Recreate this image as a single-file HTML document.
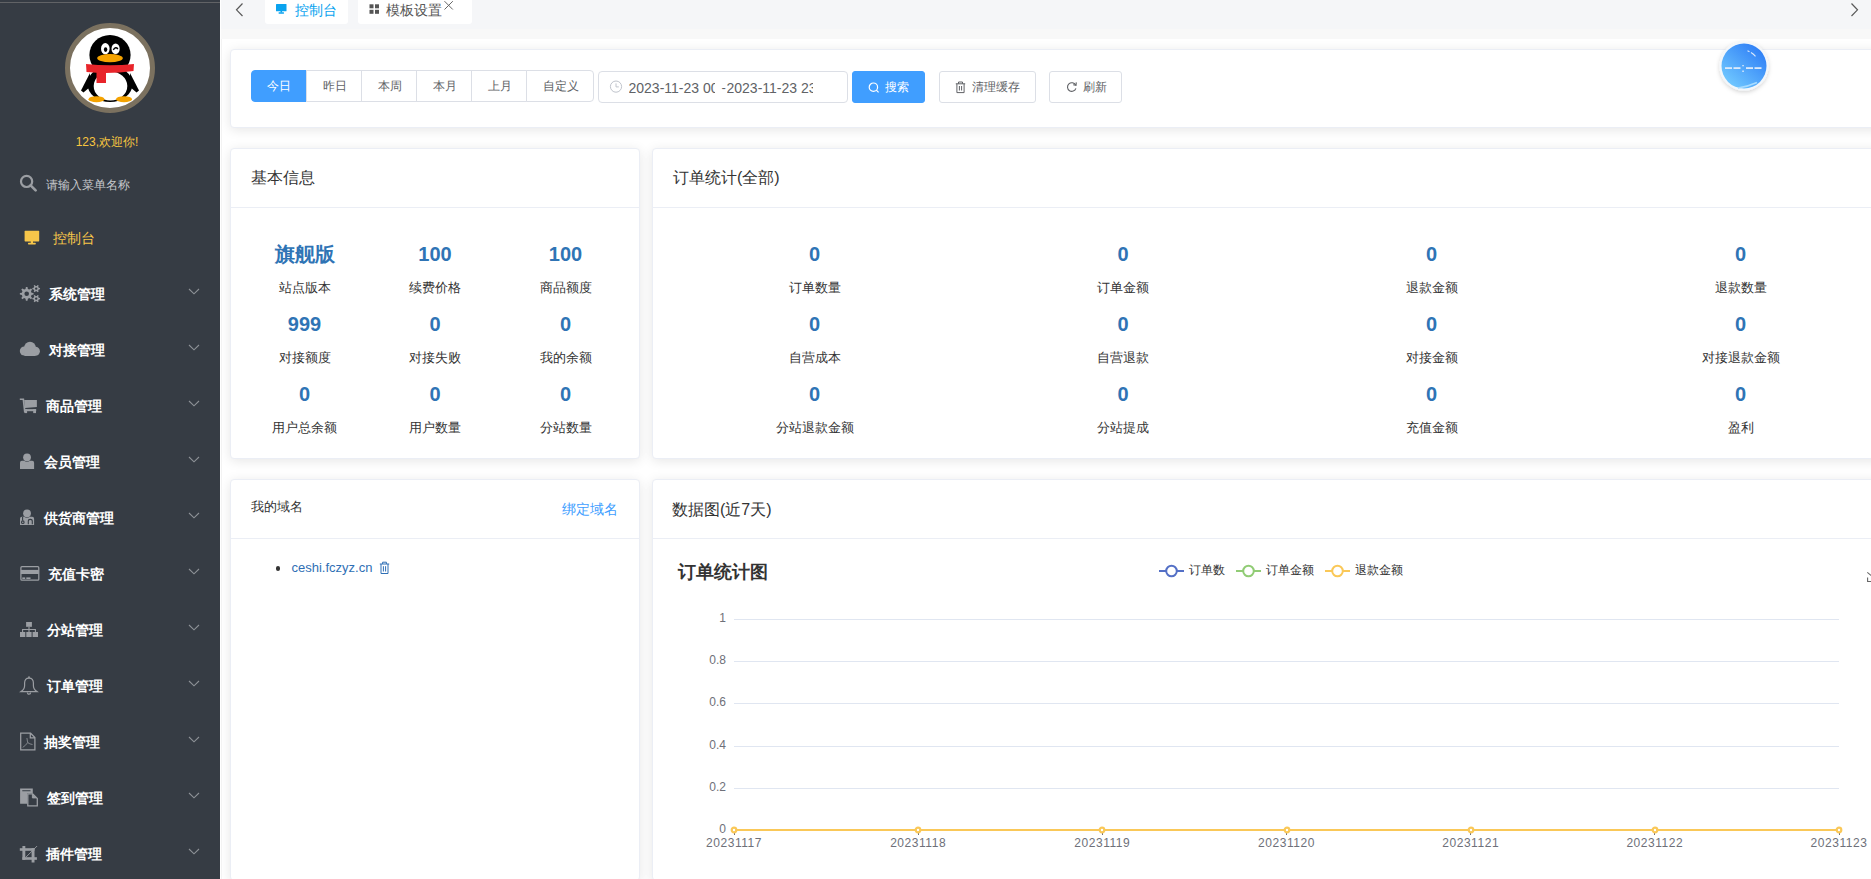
<!DOCTYPE html>
<html><head><meta charset="utf-8">
<style>
*{box-sizing:border-box;margin:0;padding:0}
html,body{width:1871px;height:879px;overflow:hidden;background:#fff;font-family:"Liberation Sans",sans-serif;color:#333}
.abs{position:absolute}
#side{position:absolute;left:0;top:0;width:220px;height:879px;background:#363c44;overflow:hidden}
#side .tl{position:absolute;left:0;top:2px;width:220px;height:1px;background:#616366}
.mt{position:absolute;font-size:14px;line-height:20px;color:#fff;white-space:nowrap;font-weight:700}
#topbar{position:absolute;left:220px;top:0;width:1651px;height:29px;background:#f5f6f8;border-left:1px solid #fff}
#wcol{position:absolute;left:220px;top:0;width:1px;height:879px;background:#fff;z-index:5}
#strip{position:absolute;left:221px;top:29px;width:1650px;height:10px;background:#f8f8f8}
#main{position:absolute;left:221px;top:39px;width:1650px;height:840px;background:#fff;overflow:hidden}
.card{position:absolute;background:#fff;border:1px solid #ebeef5;border-radius:4px;box-shadow:0 2px 12px 0 rgba(0,0,0,.1)}
.hd{position:absolute;left:0;right:0;top:0;height:58px;border-bottom:1px solid #ebeef5}
</style></head><body>
<div id="side">
<div class="tl"></div>
<svg class="abs" style="left:62px;top:20px" width="96" height="96" viewBox="62 20 96 96">
<circle cx="110" cy="68" r="42.5" fill="#fff" stroke="#7b715f" stroke-width="5"/>
<ellipse cx="110" cy="55" rx="20.6" ry="20" fill="#000"/>
<ellipse cx="110" cy="84" rx="22.5" ry="18" fill="#000"/>
<path d="M90,73 L81,90.5 L83.5,92.5 L90,87z" fill="#000"/>
<path d="M130,73 L139,90.5 L136.5,92.5 L130,87z" fill="#000"/>
<ellipse cx="110.5" cy="86" rx="16.8" ry="14.6" fill="#fff"/>
<ellipse cx="105.3" cy="48.7" rx="4.3" ry="5.6" fill="#fff"/>
<ellipse cx="115.6" cy="48.7" rx="4.1" ry="5.3" fill="#fff"/>
<ellipse cx="105.6" cy="49.6" rx="1.7" ry="2.3" fill="#000"/>
<path d="M113.3,49.8 q2.4,-3.6 4.6,-0.8" stroke="#000" stroke-width="1.4" fill="none"/>
<ellipse cx="110" cy="58.2" rx="12.8" ry="4.1" fill="#f5a300"/>
<path d="M86,64 Q110,66.5 134,64 L133.5,71 Q110,74.5 86.5,72z" fill="#e8242a"/>
<rect x="96.5" y="70" width="9.5" height="13" fill="#e8242a"/>
<ellipse cx="96.5" cy="99.2" rx="8" ry="3" fill="#f5a300"/>
<ellipse cx="124" cy="99.2" rx="8" ry="3" fill="#f5a300"/>
</svg>
<div class="abs" style="left:0;width:214px;top:134px;text-align:center;font-size:12px;line-height:16px;color:#f7c640;font-weight:500">123,欢迎你!</div>
<svg class="abs" style="left:19px;top:174px" width="19" height="18" viewBox="0 0 19 18"><circle cx="7.6" cy="7.4" r="5.6" fill="none" stroke="#9b9ea3" stroke-width="2.2"/><path d="M11.6,11.4 L16.6,16.4" stroke="#9b9ea3" stroke-width="2.6" stroke-linecap="round"/></svg>
<div class="abs" style="left:46px;top:177px;font-size:12px;line-height:16px;color:#c6c8cc;white-space:nowrap">请输入菜单名称</div>
<svg class="abs" style="left:24px;top:230px" width="16" height="15" viewBox="0 0 16 15"><rect x="0.6" y="0.8" width="14.6" height="10.6" fill="#f7c64a" rx="0.6"/><rect x="6.8" y="11" width="2.2" height="2" fill="#f7c64a"/><rect x="4" y="12.8" width="7.8" height="1.6" fill="#f7c64a" rx="0.6"/></svg>
<div class="abs" style="left:53px;top:228px;font-size:14px;line-height:20px;color:#f7c64a;white-space:nowrap">控制台</div>
<div class="mt" style="left:48.9px;top:284px">系统管理</div>
<svg class="abs" style="left:188px;top:288px" width="12" height="7" viewBox="0 0 12 7"><path d="M1,1 L6,5.8 L11,1" fill="none" stroke="#8e9297" stroke-width="1.1"/></svg>
<div class="mt" style="left:48.5px;top:340px">对接管理</div>
<svg class="abs" style="left:188px;top:344px" width="12" height="7" viewBox="0 0 12 7"><path d="M1,1 L6,5.8 L11,1" fill="none" stroke="#8e9297" stroke-width="1.1"/></svg>
<div class="mt" style="left:46px;top:396px">商品管理</div>
<svg class="abs" style="left:188px;top:400px" width="12" height="7" viewBox="0 0 12 7"><path d="M1,1 L6,5.8 L11,1" fill="none" stroke="#8e9297" stroke-width="1.1"/></svg>
<div class="mt" style="left:43.7px;top:452px">会员管理</div>
<svg class="abs" style="left:188px;top:456px" width="12" height="7" viewBox="0 0 12 7"><path d="M1,1 L6,5.8 L11,1" fill="none" stroke="#8e9297" stroke-width="1.1"/></svg>
<div class="mt" style="left:43.7px;top:508px">供货商管理</div>
<svg class="abs" style="left:188px;top:512px" width="12" height="7" viewBox="0 0 12 7"><path d="M1,1 L6,5.8 L11,1" fill="none" stroke="#8e9297" stroke-width="1.1"/></svg>
<div class="mt" style="left:48.2px;top:564px">充值卡密</div>
<svg class="abs" style="left:188px;top:568px" width="12" height="7" viewBox="0 0 12 7"><path d="M1,1 L6,5.8 L11,1" fill="none" stroke="#8e9297" stroke-width="1.1"/></svg>
<div class="mt" style="left:47px;top:620px">分站管理</div>
<svg class="abs" style="left:188px;top:624px" width="12" height="7" viewBox="0 0 12 7"><path d="M1,1 L6,5.8 L11,1" fill="none" stroke="#8e9297" stroke-width="1.1"/></svg>
<div class="mt" style="left:47px;top:676px">订单管理</div>
<svg class="abs" style="left:188px;top:680px" width="12" height="7" viewBox="0 0 12 7"><path d="M1,1 L6,5.8 L11,1" fill="none" stroke="#8e9297" stroke-width="1.1"/></svg>
<div class="mt" style="left:44.3px;top:732px">抽奖管理</div>
<svg class="abs" style="left:188px;top:736px" width="12" height="7" viewBox="0 0 12 7"><path d="M1,1 L6,5.8 L11,1" fill="none" stroke="#8e9297" stroke-width="1.1"/></svg>
<div class="mt" style="left:47px;top:788px">签到管理</div>
<svg class="abs" style="left:188px;top:792px" width="12" height="7" viewBox="0 0 12 7"><path d="M1,1 L6,5.8 L11,1" fill="none" stroke="#8e9297" stroke-width="1.1"/></svg>
<div class="mt" style="left:45.5px;top:844px">插件管理</div>
<svg class="abs" style="left:188px;top:848px" width="12" height="7" viewBox="0 0 12 7"><path d="M1,1 L6,5.8 L11,1" fill="none" stroke="#8e9297" stroke-width="1.1"/></svg>
<svg class="abs" style="left:0;top:0" width="220" height="879" viewBox="0 0 220 879">
<path fill-rule="evenodd" fill="#9b9ea3" d="M31.56,292.63 L33.55,293.00 L33.55,294.60 L31.56,294.97 L30.97,296.41 L32.11,298.08 L30.98,299.21 L29.31,298.07 L27.87,298.66 L27.50,300.65 L25.90,300.65 L25.53,298.66 L24.09,298.07 L22.42,299.21 L21.29,298.08 L22.43,296.41 L21.84,294.97 L19.85,294.60 L19.85,293.00 L21.84,292.63 L22.43,291.19 L21.29,289.52 L22.42,288.39 L24.09,289.53 L25.53,288.94 L25.90,286.95 L27.50,286.95 L27.87,288.94 L29.31,289.53 L30.98,288.39 L32.11,289.52 L30.97,291.19Z M29.00,293.80 A2.3,2.3 0 1 0 24.40,293.80 A2.3,2.3 0 1 0 29.00,293.80Z M38.78,287.81 L40.04,287.92 L40.04,289.28 L38.78,289.39 L38.17,290.44 L38.71,291.58 L37.53,292.27 L36.81,291.23 L35.59,291.23 L34.87,292.27 L33.69,291.58 L34.23,290.44 L33.62,289.39 L32.36,289.28 L32.36,287.92 L33.62,287.81 L34.23,286.76 L33.69,285.62 L34.87,284.93 L35.59,285.97 L36.81,285.97 L37.53,284.93 L38.71,285.62 L38.17,286.76Z M37.40,288.60 A1.2,1.2 0 1 0 35.00,288.60 A1.2,1.2 0 1 0 37.40,288.60Z M38.78,297.81 L40.04,297.92 L40.04,299.28 L38.78,299.39 L38.17,300.44 L38.71,301.58 L37.53,302.27 L36.81,301.23 L35.59,301.23 L34.87,302.27 L33.69,301.58 L34.23,300.44 L33.62,299.39 L32.36,299.28 L32.36,297.92 L33.62,297.81 L34.23,296.76 L33.69,295.62 L34.87,294.93 L35.59,295.97 L36.81,295.97 L37.53,294.93 L38.71,295.62 L38.17,296.76Z M37.40,298.60 A1.2,1.2 0 1 0 35.00,298.60 A1.2,1.2 0 1 0 37.40,298.60Z"/>
<g fill="#9b9ea3"><circle cx="24.4" cy="351" r="4.6"/><circle cx="30" cy="347.6" r="5.9"/><circle cx="35.4" cy="351.2" r="4.5"/><rect x="24.4" y="350" width="11" height="6" /></g>
<g fill="#9b9ea3"><path d="M19.8,398.6 h4.3 l1.6,13.9 h-1.7 l-1.4,-12.4 h-2.8z"/><path d="M24.2,399.9 h12.7 v7.2 l-11.9,0.8z"/><rect x="25.2" y="409.1" width="11" height="2.1"/><rect x="24.6" y="409.1" width="2.5" height="4"/><rect x="33.2" y="409.1" width="2.8" height="4"/></g>
<g fill="#9b9ea3"><circle cx="27.05" cy="457.3" r="3.9"/><path d="M20,469 v-6.3 q0,-1.9 1.9,-1.9 h2.2 q1.3,1 2.9,1 q1.6,0 2.9,-1 h2.3 q1.9,0 1.9,1.9 v6.3z"/></g>
<g fill="#9b9ea3"><circle cx="27.05" cy="513.3" r="3.9"/><path d="M20,525 v-6.3 q0,-1.9 1.9,-1.9 h2.2 q1.3,1 2.9,1 q1.6,0 2.9,-1 h2.3 q1.9,0 1.9,1.9 v6.3z"/></g>
<g fill="none" stroke="#363c44" stroke-width="1.1"><path d="M22.6,517 v3.6"/><circle cx="22.8" cy="522.2" r="1.3"/><path d="M28.3,524.3 v-3 q0,-1.9 2,-1.9 q2,0 2,1.9 v3"/></g>
<g fill="none" stroke="#9b9ea3" stroke-width="1.25"><rect x="20.9" y="566.7" width="17.9" height="13.5" rx="1"/></g>
<g fill="#9b9ea3"><rect x="20.9" y="569.9" width="17.9" height="4.1"/><rect x="22.3" y="577.4" width="2.9" height="1.6"/><rect x="26.3" y="577.4" width="4.2" height="1.6"/></g>
<g fill="#9b9ea3"><rect x="26.1" y="622" width="5.8" height="4.8"/><rect x="20" y="632" width="5.3" height="5"/><rect x="26.3" y="632" width="5.3" height="5"/><rect x="32.6" y="632" width="5.4" height="5"/></g>
<g fill="none" stroke="#9b9ea3" stroke-width="1.1"><path d="M29,626.8 v5.2 M22.6,632 v-2.5 h12.8 v2.5"/></g>
<g fill="none" stroke="#9b9ea3" stroke-width="1.2"><path d="M29,678.1 c-2.8,0 -4.4,1.9 -4.4,5 v2.6 c0,2.5 -1.4,4.4 -3.6,5.9 h16 c-2.2,-1.5 -3.6,-3.4 -3.6,-5.9 v-2.6 c0,-3.1 -1.6,-5 -4.4,-5z"/><path d="M27.4,692.6 a1.6,1.6 0 0 0 3.2,0"/></g>
<circle cx="29" cy="677.2" r="0.9" fill="#9b9ea3"/>
<g fill="none" stroke="#9b9ea3" stroke-width="1.25"><path d="M20.7,733.2 h9.9 l4.3,4.3 v12.4 h-14.2z M30.3,733.4 v4.5 h4.5"/></g>
<g fill="none" stroke="#9b9ea3" stroke-width="0.75"><path d="M26.9,738 q0.6,3.8 0.8,4.6 q-2.3,3.2 -5,4.8 M27.7,742.6 q2,1.6 4.8,1.9"/></g>
<g fill="#9b9ea3"><path fill-rule="evenodd" d="M20.1,788.5 h12.7 v4.7 h-5.7 v10.6 h-7z M22.3,790.3 h8.2 v0.9 h-8.2z"/></g>
<g fill="none" stroke="#9b9ea3" stroke-width="1.3"><path d="M27.8,793.9 h4.9 l4.6,4.5 v7.4 h-9.5z"/></g>
<path d="M32.4,794 v3.9 h4.2z" fill="#9b9ea3" stroke="#9b9ea3" stroke-width="1"/>
<g fill="#9b9ea3"><rect x="22.4" y="846" width="2.9" height="13.8"/><rect x="19.8" y="848.2" width="14.7" height="2.6"/><rect x="31.6" y="848.2" width="2.9" height="14.3"/><rect x="22.4" y="857.2" width="14.5" height="2.6"/></g>
<path d="M25.8,857.3 L37.1,846" stroke="#9b9ea3" stroke-width="0.9"/>
</svg>
</div>
<div id="topbar"></div>
<div id="strip"></div><div id="wcol"></div><div style="position:absolute;left:221px;top:39px;width:1px;height:840px;background:#f3f3f3;z-index:4"></div>
<div id="main">
<div class="card" style="left:9px;top:10px;width:1673px;height:79px"></div>
<div class="card" style="left:9px;top:109px;width:410px;height:311px"><div class="hd" style="height:59px"></div></div>
<div class="card" style="left:431px;top:109px;width:1251px;height:311px"><div class="hd" style="height:59px"></div></div>
<div class="card" style="left:9px;top:440px;width:410px;height:402px"><div class="hd" style="height:59px"></div></div>
<div class="card" style="left:431px;top:440px;width:1251px;height:402px"><div class="hd" style="height:59px"></div></div>
</div>
<svg class="abs" style="left:234px;top:2px" width="12" height="16" viewBox="0 0 12 16"><path d="M8.5,1.5 L2.5,7.8 L8.5,14" fill="none" stroke="#595959" stroke-width="1.2"/></svg>
<svg class="abs" style="left:1849px;top:2px" width="12" height="16" viewBox="0 0 12 16"><path d="M2.5,1.5 L8.5,7.8 L2.5,14" fill="none" stroke="#595959" stroke-width="1.2"/></svg>
<div class="abs" style="left:265px;top:0;width:83px;height:24px;background:#fff;border-radius:0 0 3px 3px"></div>
<div class="abs" style="left:358px;top:0;width:114px;height:24px;background:#fff;border-radius:0 0 3px 3px"></div>
<svg class="abs" style="left:276px;top:4px" width="11" height="10" viewBox="0 0 11 10"><rect x="0" y="0" width="10.5" height="7.2" fill="#0aa3ef" rx="0.5"/><rect x="4.5" y="7" width="1.6" height="1.5" fill="#0aa3ef"/><rect x="2.5" y="8.3" width="5.6" height="1.4" fill="#0aa3ef" rx="0.6"/></svg>
<div class="abs" style="left:294.5px;top:0.0px;font-size:14px;line-height:20px;color:#0aa3ef;font-weight:normal;white-space:nowrap;">控制台</div>
<svg class="abs" style="left:369px;top:4px" width="11" height="11" viewBox="0 0 11 11"><g fill="#555"><rect x="0.5" y="0.3" width="4" height="4"/><rect x="6" y="0.3" width="4" height="4"/><rect x="0.5" y="5.8" width="4" height="4"/><rect x="6" y="5.8" width="4" height="4"/></g></svg>
<div class="abs" style="left:386px;top:0.0px;font-size:14px;line-height:20px;color:#555;font-weight:normal;white-space:nowrap;">模板设置</div>
<svg class="abs" style="left:443px;top:0px" width="11" height="11" viewBox="0 0 11 11"><path d="M1.5,1.2 L9.8,9.5 M9.8,1.2 L1.5,9.5" stroke="#666" stroke-width="1"/></svg>
<div class="abs" style="left:251px;top:70px;width:56px;height:32px;background:#409eff;border:1px solid #409eff;border-radius:4px 0 0 4px;color:#fff;font-size:12px;line-height:30px;text-align:center">今日</div>
<div class="abs" style="left:306px;top:70px;width:56px;height:32px;background:#fff;border:1px solid #dcdfe6;color:#606266;font-size:12px;line-height:30px;text-align:center;padding-left:1px">昨日</div>
<div class="abs" style="left:361px;top:70px;width:56px;height:32px;background:#fff;border:1px solid #dcdfe6;color:#606266;font-size:12px;line-height:30px;text-align:center;padding-left:1px">本周</div>
<div class="abs" style="left:416px;top:70px;width:56px;height:32px;background:#fff;border:1px solid #dcdfe6;color:#606266;font-size:12px;line-height:30px;text-align:center;padding-left:1px">本月</div>
<div class="abs" style="left:471px;top:70px;width:56px;height:32px;background:#fff;border:1px solid #dcdfe6;color:#606266;font-size:12px;line-height:30px;text-align:center;padding-left:1px">上月</div>
<div class="abs" style="left:526px;top:70px;width:68px;height:32px;background:#fff;border:1px solid #dcdfe6;border-radius:0 4px 4px 0;color:#606266;font-size:12px;line-height:30px;text-align:center;padding-left:1px">自定义</div>
<div class="abs" style="left:598px;top:71px;width:250px;height:32px;background:#fff;border:1px solid #dcdfe6;border-radius:4px"></div>
<svg class="abs" style="left:609px;top:80px" width="14" height="14" viewBox="0 0 14 14"><circle cx="7" cy="6.6" r="5.6" fill="none" stroke="#c0c4cc" stroke-width="1"/><path d="M7,3.4 V6.9 H9.8" fill="none" stroke="#c0c4cc" stroke-width="1"/></svg>
<div class="abs" style="left:628.5px;top:78px;width:86.5px;height:20px;overflow:hidden;font-size:14px;line-height:20px;color:#606266;white-space:nowrap">2023-11-23 00:00:00</div>
<div class="abs" style="left:721.5px;top:78px;font-size:13px;line-height:20px;color:#606266">-</div>
<div class="abs" style="left:726.5px;top:78px;width:86.5px;height:20px;overflow:hidden;font-size:14px;line-height:20px;color:#606266;white-space:nowrap">2023-11-23 23:59:59</div>
<div class="abs" style="left:852px;top:71px;width:73px;height:32px;background:#409eff;border:1px solid #409eff;border-radius:3px"></div>
<svg class="abs" style="left:868px;top:82px" width="12" height="12" viewBox="0 0 12 12"><circle cx="5.4" cy="5.2" r="4.2" fill="none" stroke="#fff" stroke-width="1.2"/><path d="M8.3,8.1 L10.6,10.4" stroke="#fff" stroke-width="1.2"/></svg>
<div class="abs" style="left:885px;top:77.0px;font-size:12px;line-height:20px;color:#fff;font-weight:normal;white-space:nowrap;">搜索</div>
<div class="abs" style="left:939px;top:71px;width:97px;height:32px;background:#fff;border:1px solid #dcdfe6;border-radius:3px"></div>
<svg class="abs" style="left:955px;top:81px" width="11" height="13" viewBox="0 0 11 13"><path d="M0.8,2.8 H10.2 M3.5,2.8 V1 H7.5 V2.8 M1.9,2.8 V11.6 H9.1 V2.8 M4.4,5 V9.5 M6.6,5 V9.5" fill="none" stroke="#606266" stroke-width="1"/></svg>
<div class="abs" style="left:971.5px;top:77.0px;font-size:12px;line-height:20px;color:#606266;font-weight:normal;white-space:nowrap;">清理缓存</div>
<div class="abs" style="left:1049px;top:71px;width:73px;height:32px;background:#fff;border:1px solid #dcdfe6;border-radius:3px"></div>
<svg class="abs" style="left:1066px;top:81px" width="12" height="12" viewBox="0 0 12 12"><path d="M9.6,4 A4.3,4.3 0 1 0 9.9,7.4" fill="none" stroke="#606266" stroke-width="1.1"/><path d="M7.2,3.8 L10,4.3 L10.3,1.4" fill="none" stroke="#606266" stroke-width="1.1"/></svg>
<div class="abs" style="left:1082.5px;top:77.0px;font-size:12px;line-height:20px;color:#606266;font-weight:normal;white-space:nowrap;">刷新</div>
<svg class="abs" style="left:1716px;top:38px" width="58" height="58" viewBox="0 0 58 58"><defs><linearGradient id="bg1" x1="0.85" y1="0.1" x2="0.15" y2="0.9"><stop offset="0" stop-color="#2f7ff6"/><stop offset="1" stop-color="#70c8ff"/></linearGradient><filter id="sh" x="-30%" y="-30%" width="160%" height="160%"><feDropShadow dx="0" dy="1.5" stdDeviation="2" flood-color="#000" flood-opacity="0.18"/></filter></defs><circle cx="28" cy="28" r="24.5" fill="#f3f7fb" filter="url(#sh)"/><circle cx="28" cy="28" r="22.5" fill="url(#bg1)"/><g fill="#dbe9fb"><rect x="9" y="29.2" width="7" height="1.8"/><rect x="17.5" y="29.2" width="7" height="1.8"/><rect x="30" y="29.2" width="7" height="1.8"/><rect x="38.5" y="29.2" width="7" height="1.8"/><rect x="26.3" y="27" width="1.5" height="1.3"/><rect x="26.3" y="32.5" width="1.5" height="1.5"/></g><path d="M31.5,12.8 l2,0.9 M35,14.6 q2.6,1.5 4.5,3.8" stroke="#dbe9fb" stroke-width="1.1" fill="none"/><path d="M22,50 q10,-1.5 19,-5.5" stroke="#a8dcff" stroke-width="1.6" fill="none"/></svg>
<div class="abs" style="left:251px;top:168.0px;font-size:16px;line-height:20px;color:#333;font-weight:normal;white-space:nowrap;">基本信息</div>
<div class="abs" style="left:244.5px;top:242.0px;width:120px;text-align:center;font-size:20px;line-height:24px;color:#2f74b5;font-weight:bold;white-space:nowrap">旗舰版</div>
<div class="abs" style="left:244.5px;top:279.0px;width:120px;text-align:center;font-size:13px;line-height:18px;color:#333;font-weight:normal;white-space:nowrap">站点版本</div>
<div class="abs" style="left:375.0px;top:242.0px;width:120px;text-align:center;font-size:20px;line-height:24px;color:#2f74b5;font-weight:bold;white-space:nowrap">100</div>
<div class="abs" style="left:375.0px;top:279.0px;width:120px;text-align:center;font-size:13px;line-height:18px;color:#333;font-weight:normal;white-space:nowrap">续费价格</div>
<div class="abs" style="left:505.5px;top:242.0px;width:120px;text-align:center;font-size:20px;line-height:24px;color:#2f74b5;font-weight:bold;white-space:nowrap">100</div>
<div class="abs" style="left:505.5px;top:279.0px;width:120px;text-align:center;font-size:13px;line-height:18px;color:#333;font-weight:normal;white-space:nowrap">商品额度</div>
<div class="abs" style="left:244.5px;top:312.0px;width:120px;text-align:center;font-size:20px;line-height:24px;color:#2f74b5;font-weight:bold;white-space:nowrap">999</div>
<div class="abs" style="left:244.5px;top:349.0px;width:120px;text-align:center;font-size:13px;line-height:18px;color:#333;font-weight:normal;white-space:nowrap">对接额度</div>
<div class="abs" style="left:375.0px;top:312.0px;width:120px;text-align:center;font-size:20px;line-height:24px;color:#2f74b5;font-weight:bold;white-space:nowrap">0</div>
<div class="abs" style="left:375.0px;top:349.0px;width:120px;text-align:center;font-size:13px;line-height:18px;color:#333;font-weight:normal;white-space:nowrap">对接失败</div>
<div class="abs" style="left:505.5px;top:312.0px;width:120px;text-align:center;font-size:20px;line-height:24px;color:#2f74b5;font-weight:bold;white-space:nowrap">0</div>
<div class="abs" style="left:505.5px;top:349.0px;width:120px;text-align:center;font-size:13px;line-height:18px;color:#333;font-weight:normal;white-space:nowrap">我的余额</div>
<div class="abs" style="left:244.5px;top:382.0px;width:120px;text-align:center;font-size:20px;line-height:24px;color:#2f74b5;font-weight:bold;white-space:nowrap">0</div>
<div class="abs" style="left:244.5px;top:419.0px;width:120px;text-align:center;font-size:13px;line-height:18px;color:#333;font-weight:normal;white-space:nowrap">用户总余额</div>
<div class="abs" style="left:375.0px;top:382.0px;width:120px;text-align:center;font-size:20px;line-height:24px;color:#2f74b5;font-weight:bold;white-space:nowrap">0</div>
<div class="abs" style="left:375.0px;top:419.0px;width:120px;text-align:center;font-size:13px;line-height:18px;color:#333;font-weight:normal;white-space:nowrap">用户数量</div>
<div class="abs" style="left:505.5px;top:382.0px;width:120px;text-align:center;font-size:20px;line-height:24px;color:#2f74b5;font-weight:bold;white-space:nowrap">0</div>
<div class="abs" style="left:505.5px;top:419.0px;width:120px;text-align:center;font-size:13px;line-height:18px;color:#333;font-weight:normal;white-space:nowrap">分站数量</div>
<div class="abs" style="left:673px;top:168.0px;font-size:16px;line-height:20px;color:#333;font-weight:normal;white-space:nowrap;">订单统计(全部)</div>
<div class="abs" style="left:754.5px;top:242.0px;width:120px;text-align:center;font-size:20px;line-height:24px;color:#2f74b5;font-weight:bold;white-space:nowrap">0</div>
<div class="abs" style="left:754.5px;top:279.0px;width:120px;text-align:center;font-size:13px;line-height:18px;color:#333;font-weight:normal;white-space:nowrap">订单数量</div>
<div class="abs" style="left:1063.0px;top:242.0px;width:120px;text-align:center;font-size:20px;line-height:24px;color:#2f74b5;font-weight:bold;white-space:nowrap">0</div>
<div class="abs" style="left:1063.0px;top:279.0px;width:120px;text-align:center;font-size:13px;line-height:18px;color:#333;font-weight:normal;white-space:nowrap">订单金额</div>
<div class="abs" style="left:1371.5px;top:242.0px;width:120px;text-align:center;font-size:20px;line-height:24px;color:#2f74b5;font-weight:bold;white-space:nowrap">0</div>
<div class="abs" style="left:1371.5px;top:279.0px;width:120px;text-align:center;font-size:13px;line-height:18px;color:#333;font-weight:normal;white-space:nowrap">退款金额</div>
<div class="abs" style="left:1680.5px;top:242.0px;width:120px;text-align:center;font-size:20px;line-height:24px;color:#2f74b5;font-weight:bold;white-space:nowrap">0</div>
<div class="abs" style="left:1680.5px;top:279.0px;width:120px;text-align:center;font-size:13px;line-height:18px;color:#333;font-weight:normal;white-space:nowrap">退款数量</div>
<div class="abs" style="left:754.5px;top:312.0px;width:120px;text-align:center;font-size:20px;line-height:24px;color:#2f74b5;font-weight:bold;white-space:nowrap">0</div>
<div class="abs" style="left:754.5px;top:349.0px;width:120px;text-align:center;font-size:13px;line-height:18px;color:#333;font-weight:normal;white-space:nowrap">自营成本</div>
<div class="abs" style="left:1063.0px;top:312.0px;width:120px;text-align:center;font-size:20px;line-height:24px;color:#2f74b5;font-weight:bold;white-space:nowrap">0</div>
<div class="abs" style="left:1063.0px;top:349.0px;width:120px;text-align:center;font-size:13px;line-height:18px;color:#333;font-weight:normal;white-space:nowrap">自营退款</div>
<div class="abs" style="left:1371.5px;top:312.0px;width:120px;text-align:center;font-size:20px;line-height:24px;color:#2f74b5;font-weight:bold;white-space:nowrap">0</div>
<div class="abs" style="left:1371.5px;top:349.0px;width:120px;text-align:center;font-size:13px;line-height:18px;color:#333;font-weight:normal;white-space:nowrap">对接金额</div>
<div class="abs" style="left:1680.5px;top:312.0px;width:120px;text-align:center;font-size:20px;line-height:24px;color:#2f74b5;font-weight:bold;white-space:nowrap">0</div>
<div class="abs" style="left:1680.5px;top:349.0px;width:120px;text-align:center;font-size:13px;line-height:18px;color:#333;font-weight:normal;white-space:nowrap">对接退款金额</div>
<div class="abs" style="left:754.5px;top:382.0px;width:120px;text-align:center;font-size:20px;line-height:24px;color:#2f74b5;font-weight:bold;white-space:nowrap">0</div>
<div class="abs" style="left:754.5px;top:419.0px;width:120px;text-align:center;font-size:13px;line-height:18px;color:#333;font-weight:normal;white-space:nowrap">分站退款金额</div>
<div class="abs" style="left:1063.0px;top:382.0px;width:120px;text-align:center;font-size:20px;line-height:24px;color:#2f74b5;font-weight:bold;white-space:nowrap">0</div>
<div class="abs" style="left:1063.0px;top:419.0px;width:120px;text-align:center;font-size:13px;line-height:18px;color:#333;font-weight:normal;white-space:nowrap">分站提成</div>
<div class="abs" style="left:1371.5px;top:382.0px;width:120px;text-align:center;font-size:20px;line-height:24px;color:#2f74b5;font-weight:bold;white-space:nowrap">0</div>
<div class="abs" style="left:1371.5px;top:419.0px;width:120px;text-align:center;font-size:13px;line-height:18px;color:#333;font-weight:normal;white-space:nowrap">充值金额</div>
<div class="abs" style="left:1680.5px;top:382.0px;width:120px;text-align:center;font-size:20px;line-height:24px;color:#2f74b5;font-weight:bold;white-space:nowrap">0</div>
<div class="abs" style="left:1680.5px;top:419.0px;width:120px;text-align:center;font-size:13px;line-height:18px;color:#333;font-weight:normal;white-space:nowrap">盈利</div>
<div class="abs" style="left:251px;top:497.0px;font-size:13px;line-height:20px;color:#333;font-weight:normal;white-space:nowrap;">我的域名</div>
<div class="abs" style="left:561.5px;top:499.0px;font-size:14px;line-height:20px;color:#409eff;font-weight:normal;white-space:nowrap;">绑定域名</div>
<div class="abs" style="left:275.8px;top:566.2px;width:4.6px;height:4.6px;border-radius:50%;background:#333"></div>
<div class="abs" style="left:291.5px;top:558.0px;font-size:13px;line-height:20px;color:#2f6fb5;font-weight:normal;white-space:nowrap;">ceshi.fczyz.cn</div>
<svg class="abs" style="left:379px;top:561px" width="11" height="14" viewBox="0 0 11 14"><path d="M0.8,3 H10.2 M3.6,3 V1.2 H7.4 V3 M2,3 V12.5 H9 V3 M4.4,5.2 V10.5 M6.6,5.2 V10.5" fill="none" stroke="#2f6fb5" stroke-width="1"/></svg>
<div class="abs" style="left:672px;top:499.5px;font-size:16px;line-height:20px;color:#333;font-weight:normal;white-space:nowrap;">数据图(近7天)</div>
<div class="abs" style="left:678px;top:560.0px;font-size:18px;line-height:24px;color:#333;font-weight:bold;white-space:nowrap;">订单统计图</div>
<svg class="abs" style="left:1158.5px;top:562.5px" width="26" height="16" viewBox="0 0 26 16"><path d="M0,8 H25" stroke="#5470c6" stroke-width="2"/><circle cx="12.5" cy="8" r="5.3" fill="#fff" stroke="#5470c6" stroke-width="2"/></svg>
<div class="abs" style="left:1188.5px;top:561.5px;font-size:12px;line-height:16px;color:#333;font-weight:normal;white-space:nowrap;">订单数</div>
<svg class="abs" style="left:1235.5px;top:562.5px" width="26" height="16" viewBox="0 0 26 16"><path d="M0,8 H25" stroke="#91cc75" stroke-width="2"/><circle cx="12.5" cy="8" r="5.3" fill="#fff" stroke="#91cc75" stroke-width="2"/></svg>
<div class="abs" style="left:1266px;top:561.5px;font-size:12px;line-height:16px;color:#333;font-weight:normal;white-space:nowrap;">订单金额</div>
<svg class="abs" style="left:1324.5px;top:562.5px" width="26" height="16" viewBox="0 0 26 16"><path d="M0,8 H25" stroke="#fac858" stroke-width="2"/><circle cx="12.5" cy="8" r="5.3" fill="#fff" stroke="#fac858" stroke-width="2"/></svg>
<div class="abs" style="left:1354.5px;top:561.5px;font-size:12px;line-height:16px;color:#333;font-weight:normal;white-space:nowrap;">退款金额</div>
<div class="abs" style="left:734px;top:619px;width:1105px;height:1px;background:#e0e6f1"></div>
<div class="abs" style="left:686px;top:610px;width:40px;text-align:right;font-size:12px;line-height:16px;color:#6e7079">1</div>
<div class="abs" style="left:734px;top:661.2px;width:1105px;height:1px;background:#e0e6f1"></div>
<div class="abs" style="left:686px;top:652.2px;width:40px;text-align:right;font-size:12px;line-height:16px;color:#6e7079">0.8</div>
<div class="abs" style="left:734px;top:703.4px;width:1105px;height:1px;background:#e0e6f1"></div>
<div class="abs" style="left:686px;top:694.4px;width:40px;text-align:right;font-size:12px;line-height:16px;color:#6e7079">0.6</div>
<div class="abs" style="left:734px;top:745.6px;width:1105px;height:1px;background:#e0e6f1"></div>
<div class="abs" style="left:686px;top:736.6px;width:40px;text-align:right;font-size:12px;line-height:16px;color:#6e7079">0.4</div>
<div class="abs" style="left:734px;top:787.8px;width:1105px;height:1px;background:#e0e6f1"></div>
<div class="abs" style="left:686px;top:778.8px;width:40px;text-align:right;font-size:12px;line-height:16px;color:#6e7079">0.2</div>
<div class="abs" style="left:686px;top:821px;width:40px;text-align:right;font-size:12px;line-height:16px;color:#6e7079">0</div>
<div class="abs" style="left:734px;top:829px;width:1105px;height:2px;background:#fac858"></div>
<div class="abs" style="left:733.5px;top:830px;width:1px;height:5px;background:#6e7079"></div>
<svg class="abs" style="left:729.0px;top:825px" width="10" height="10" viewBox="0 0 10 10"><circle cx="5" cy="5" r="2.3" fill="#fff" stroke="#fac858" stroke-width="2.2"/></svg>
<div class="abs" style="left:694.0px;top:835px;width:80px;text-align:center;font-size:12px;letter-spacing:0.55px;line-height:16px;color:#6e7079">20231117</div>
<div class="abs" style="left:917.67px;top:830px;width:1px;height:5px;background:#6e7079"></div>
<svg class="abs" style="left:913.17px;top:825px" width="10" height="10" viewBox="0 0 10 10"><circle cx="5" cy="5" r="2.3" fill="#fff" stroke="#fac858" stroke-width="2.2"/></svg>
<div class="abs" style="left:878.17px;top:835px;width:80px;text-align:center;font-size:12px;letter-spacing:0.55px;line-height:16px;color:#6e7079">20231118</div>
<div class="abs" style="left:1101.84px;top:830px;width:1px;height:5px;background:#6e7079"></div>
<svg class="abs" style="left:1097.34px;top:825px" width="10" height="10" viewBox="0 0 10 10"><circle cx="5" cy="5" r="2.3" fill="#fff" stroke="#fac858" stroke-width="2.2"/></svg>
<div class="abs" style="left:1062.34px;top:835px;width:80px;text-align:center;font-size:12px;letter-spacing:0.55px;line-height:16px;color:#6e7079">20231119</div>
<div class="abs" style="left:1286.01px;top:830px;width:1px;height:5px;background:#6e7079"></div>
<svg class="abs" style="left:1281.51px;top:825px" width="10" height="10" viewBox="0 0 10 10"><circle cx="5" cy="5" r="2.3" fill="#fff" stroke="#fac858" stroke-width="2.2"/></svg>
<div class="abs" style="left:1246.51px;top:835px;width:80px;text-align:center;font-size:12px;letter-spacing:0.55px;line-height:16px;color:#6e7079">20231120</div>
<div class="abs" style="left:1470.1799999999998px;top:830px;width:1px;height:5px;background:#6e7079"></div>
<svg class="abs" style="left:1465.6799999999998px;top:825px" width="10" height="10" viewBox="0 0 10 10"><circle cx="5" cy="5" r="2.3" fill="#fff" stroke="#fac858" stroke-width="2.2"/></svg>
<div class="abs" style="left:1430.6799999999998px;top:835px;width:80px;text-align:center;font-size:12px;letter-spacing:0.55px;line-height:16px;color:#6e7079">20231121</div>
<div class="abs" style="left:1654.35px;top:830px;width:1px;height:5px;background:#6e7079"></div>
<svg class="abs" style="left:1649.85px;top:825px" width="10" height="10" viewBox="0 0 10 10"><circle cx="5" cy="5" r="2.3" fill="#fff" stroke="#fac858" stroke-width="2.2"/></svg>
<div class="abs" style="left:1614.85px;top:835px;width:80px;text-align:center;font-size:12px;letter-spacing:0.55px;line-height:16px;color:#6e7079">20231122</div>
<div class="abs" style="left:1838.52px;top:830px;width:1px;height:5px;background:#6e7079"></div>
<svg class="abs" style="left:1834.02px;top:825px" width="10" height="10" viewBox="0 0 10 10"><circle cx="5" cy="5" r="2.3" fill="#fff" stroke="#fac858" stroke-width="2.2"/></svg>
<div class="abs" style="left:1799.02px;top:835px;width:80px;text-align:center;font-size:12px;letter-spacing:0.55px;line-height:16px;color:#6e7079">20231123</div>
<svg class="abs" style="left:1860px;top:568px" width="11" height="16" viewBox="1860 568 11 16"><path d="M1867.3,572.3 L1871.5,575.8 M1867.6,577.6 V581.5 H1872" fill="none" stroke="#666" stroke-width="1.1"/></svg>
</body></html>
